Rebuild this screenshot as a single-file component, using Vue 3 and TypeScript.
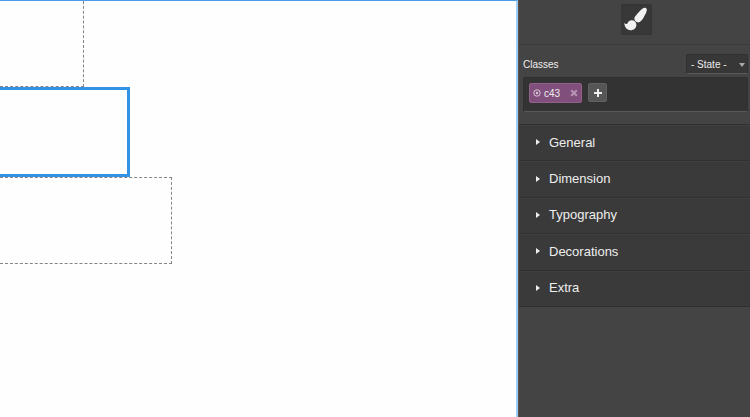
<script setup lang="ts">
import { ref } from 'vue'

const sectors = ref([
  { name: 'General', open: false },
  { name: 'Dimension', open: false },
  { name: 'Typography', open: false },
  { name: 'Decorations', open: false },
  { name: 'Extra', open: false },
])
const classes = ref(['c43'])
const state = ref('')

function removeClass(name: string) {
  classes.value = classes.value.filter((c) => c !== name)
}
function addClass() {
  classes.value.push('c' + (43 + classes.value.length))
}
</script>

<template>
  <div class="editor">
    <main class="canvas">
      <div class="block first"></div>
      <div class="block selected"></div>
      <div class="block last"></div>
    </main>

    <aside class="panel">
      <header class="views">
        <button class="view-btn" type="button" aria-label="Open style manager">
          <svg viewBox="0 0 31 31" width="31" height="31" aria-hidden="true">
            <path
              d="M22.800 4.100c1.700-.8 3.300.3 3 2.100-.3 2-1.500 4.300-2.800 6.500-1.300 2.400-2.600 4.200-4.300 5.300-1 .6-2 .6-3 0-1.200-.7-2-1.600-2.300-2.800-.2-.9.100-1.700.7-2.600 1.700-2.300 3.600-4.400 5.500-6.300 1.200-1.100 2.200-1.800 3.200-2.200z"
            />
            <path
              d="M10.300 16.200c2.900-.2 5.100 1.700 5.100 4.500 0 3.400-2.800 5.600-6 5.500-3.500-.1-5.800-2.800-6.100-7.100.8.600 1.500 1.100 2.300.9 1-.2 1.100-1.300 1.800-2.200.7-.9 1.700-1.500 2.900-1.600z"
            />
          </svg>
        </button>
      </header>

      <section class="selector">
        <div class="selector-head">
          <span id="classes-label">Classes</span>
          <div class="state">
            <select v-model="state" aria-label="State">
              <option value="">- State -</option>
              <option value="hover">Hover</option>
              <option value="active">Click</option>
              <option value="nth-of-type(2n)">Even/Odd</option>
            </select>
            <svg class="caret" viewBox="0 0 6 4" width="6" height="4" aria-hidden="true">
              <path d="M0 0h6L3 4z" />
            </svg>
          </div>
        </div>
        <div class="tags" role="group" aria-labelledby="classes-label">
          <span v-for="c in classes" :key="c" class="tag">
            <svg class="target" viewBox="0 0 8 8" width="8" height="8" aria-hidden="true">
              <circle cx="4" cy="4" r="3.200" fill="none" stroke="currentColor" />
              <circle cx="4" cy="4" r="1.200" fill="currentColor" />
            </svg>
            <span class="tag-name">{{ c }}</span>
            <button class="remove" type="button" :aria-label="'Remove ' + c" @click="removeClass(c)">
              <svg viewBox="0 0 8 8" width="8" height="8" aria-hidden="true">
                <path d="M1.200 1.200l5.600 5.600M6.800 1.200L1.200 6.800" stroke="currentColor" stroke-width="2" />
              </svg>
            </button>
          </span>
          <button class="add" type="button" aria-label="Add class" @click="addClass">
            <svg viewBox="0 0 8 8" width="8" height="8" aria-hidden="true">
              <path d="M4 0v8M0 4h8" stroke="currentColor" stroke-width="2" />
            </svg>
          </button>
        </div>
      </section>

      <div class="sectors">
        <button
          v-for="s in sectors"
          :key="s.name"
          class="sector"
          type="button"
          :aria-expanded="s.open"
          @click="s.open = !s.open"
        >
          <svg viewBox="0 0 4 6" width="4" height="6" aria-hidden="true">
            <path d="M0 0l4 3-4 3z" />
          </svg>
          <span>{{ s.name }}</span>
        </button>
      </div>
    </aside>
  </div>
</template>

<style>
body {
  margin: 0;
  background: #fff;
}
</style>

<style scoped>
.editor,
.editor * {
  box-sizing: border-box;
}
.editor {
  display: flex;
  min-height: 100vh;
  font-family: 'Liberation Sans', Arial, sans-serif;
  font-size: 10px;
  color: #eee;
}
button {
  margin: 0;
  padding: 0;
  border: 0;
  font: inherit;
  color: inherit;
  background: none;
}
svg {
  display: block;
  flex: none;
}
.canvas {
  flex: 1;
  min-width: 0;
  border-top: 1px solid #4a9be8;
  border-right: 2px solid #9bcdf6;
  background: #fefefe;
}
.block {
  border: 1px dashed #858585;
  border-left: 0;
}
.first {
  width: 84px;
  height: 86px;
  border-top: 0;
}
.selected {
  width: 130px;
  height: 90px;
  border: 3px solid #3292e3;
  border-left: 0;
}
.last {
  width: 172px;
  height: 87px;
}
.panel {
  width: 232px;
  flex: none;
  border-left: 1px solid #5a5048;
  background: #444;
}
.views {
  display: flex;
  justify-content: center;
  height: 45px;
  padding: 4px 0 0 3px;
  border-bottom: 1px solid #3b3b3b;
}
.view-btn {
  width: 31px;
  height: 31px;
  border-radius: 2px;
  background: #383838;
  box-shadow: inset 0 0 2px #303030;
  fill: #f2f2f2;
}
.selector {
  padding: 9px 2px 12px 4px;
}
.selector-head {
  display: flex;
  align-items: center;
  justify-content: space-between;
  height: 20px;
  margin-bottom: 3px;
}
.state {
  position: relative;
  width: 62px;
  height: 20px;
}
select {
  appearance: none;
  display: block;
  width: 100%;
  height: 100%;
  margin: 0;
  padding: 0 12px 0 4px;
  border: 1px solid #303030;
  border-bottom-color: #5a5a5a;
  border-radius: 2px;
  background: #373737;
  color: #eee;
  font: inherit;
}
.caret {
  position: absolute;
  right: 3px;
  top: 9px;
  fill: #aaa;
  pointer-events: none;
}
.tags {
  display: flex;
  align-items: flex-start;
  gap: 6px;
  min-height: 35px;
  padding: 5px;
  border: 1px solid #303030;
  border-bottom-color: #585858;
  border-radius: 2px;
  background: #333;
}
.tag {
  display: flex;
  align-items: center;
  height: 20px;
  padding: 0 3px;
  border: 1px solid #93608b;
  border-radius: 2px;
  background: #804f7b;
}
.tag-name {
  margin: 0 10px 0 3px;
}
.target {
  color: #d9c6d7;
}
.remove {
  color: #b995b5;
}
.add {
  display: flex;
  align-items: center;
  justify-content: center;
  width: 19px;
  height: 19px;
  border: 1px solid #616161;
  border-radius: 2px;
  background: #565656;
}
.sectors {
  display: grid;
  grid-auto-rows: 1fr;
  height: 183px;
  border-top: 1px solid #303030;
}
.sector {
  display: flex;
  align-items: center;
  gap: 9px;
  padding: 0 0 2px 17px;
  border-top: 1px solid #404040;
  border-bottom: 1px solid #303030;
  background: #3a3a3a;
  font-size: 13px;
  text-align: left;
  fill: #eee;
}
</style>
